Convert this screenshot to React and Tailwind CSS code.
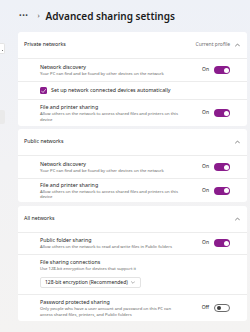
const font = { fontFamily: '"Noto Sans", "Open Sans", sans-serif' };

const Toggle = ({ on }) =>
  on ? (
    <div className="w-[16px] h-[8px] rounded-full bg-[#8a1c8c] flex items-center justify-end pr-[1.5px]">
      <div className="w-[5px] h-[5px] rounded-full bg-white" />
    </div>
  ) : (
    <div className="w-[16px] h-[8px] rounded-full border border-[#6b6b6b] bg-white flex items-center pl-[1.5px]">
      <div className="w-[4px] h-[4px] rounded-full bg-[#3b3b3b]" />
    </div>
  );

const ChevronUp = () => (
  <svg width="5" height="4" viewBox="0 0 10 6" fill="none">
    <path d="M1 5L5 1L9 5" stroke="#444" strokeWidth="1.3" strokeLinecap="round" strokeLinejoin="round" />
  </svg>
);

const ChevronDown = () => (
  <svg width="4" height="3" viewBox="0 0 10 6" fill="none">
    <path d="M1 1L5 5L9 1" stroke="#666" strokeWidth="1.3" strokeLinecap="round" strokeLinejoin="round" />
  </svg>
);

const Header = ({ title, extra }) => (
  <div className="h-[26px] flex items-center pl-[6px] pr-[7px]">
    <span className="text-[5.3px] text-[#1b1b1b]">{title}</span>
    <div className="ml-auto flex items-center gap-[5px]">
      {extra && <span className="text-[5px] text-[#707070]">{extra}</span>}
      <ChevronUp />
    </div>
  </div>
);

const ToggleRow = ({ title, desc, on = true, h = "h-[23px]" }) => (
  <div className={`${h} border-t border-[#ececec] flex items-center pl-[22px] pr-[17px]`}>
    <div className="flex-1 pr-[18px]">
      <div className="text-[5.3px] leading-[7px] text-[#262626]">{title}</div>
      <div className="text-[4.2px] leading-[5.5px] text-[#666]">{desc}</div>
    </div>
    <div className="flex items-center gap-[5px]">
      <span className="text-[5px] text-[#262626]">{on ? "On" : "Off"}</span>
      <Toggle on={on} />
    </div>
  </div>
);

export default function App() {
  return (
    <div
      className="w-[250px] h-[332px] overflow-hidden flex bg-gradient-to-b from-[#eef1f7] via-[#f2f2f4] to-[#f4f3f2]"
      style={font}
    >
      <div className="w-[5px] shrink-0 flex flex-col">
        <div className="mt-[43px] h-[11px] bg-white rounded-r-[2px] border border-l-0 border-[#e4e4e4] flex items-end justify-end pr-[1px] pb-[2px]">
          <div className="w-[1px] h-[1px] bg-[#777]" />
        </div>
        <div className="mt-[56px] h-[14px] bg-[#eaeaea] rounded-r-[2px]" />
      </div>

      <div className="ml-[13px] w-[229px] flex flex-col">
        <div className="h-[32px] flex items-center">
          <span className="text-[7px] tracking-[0.5px] text-[#444] ml-[1px]">•••</span>
          <span className="text-[7px] text-[#555] ml-[9px]">›</span>
          <h1 className="text-[10px] font-semibold text-[#1b1b1b] ml-[6px]">Advanced sharing settings</h1>
        </div>

        <div className="bg-white rounded-[3px] h-[94px] flex flex-col">
          <Header title="Private networks" extra="Current profile" />
          <ToggleRow
            title="Network discovery"
            desc="Your PC can find and be found by other devices on the network"
          />
          <div className="h-[18px] border-t border-[#ececec] flex items-center pl-[22px] gap-[4px]">
            <div className="w-[7px] h-[7px] rounded-[1.5px] bg-[#8a1c8c] flex items-center justify-center">
              <svg width="5" height="4" viewBox="0 0 10 8" fill="none">
                <path d="M1 4L4 7L9 1" stroke="white" strokeWidth="1.4" strokeLinecap="round" strokeLinejoin="round" />
              </svg>
            </div>
            <span className="text-[5.3px] text-[#262626]">Set up network connected devices automatically</span>
          </div>
          <ToggleRow
            h="h-[27px]"
            title="File and printer sharing"
            desc="Allow others on the network to access shared files and printers on this device"
          />
        </div>

        <div className="bg-white rounded-[3px] h-[73px] mt-[3px] flex flex-col">
          <Header title="Public networks" />
          <ToggleRow
            title="Network discovery"
            desc="Your PC can find and be found by other devices on the network"
          />
          <ToggleRow
            h="h-[24px]"
            title="File and printer sharing"
            desc="Allow others on the network to access shared files and printers on this device"
          />
        </div>

        <div className="bg-white rounded-[3px] h-[115px] mt-[4px] flex flex-col">
          <Header title="All networks" />
          <ToggleRow
            h="h-[22px]"
            title="Public folder sharing"
            desc="Allow others on the network to read and write files in Public folders"
          />
          <div className="h-[41px] border-t border-[#ececec] pl-[22px] pt-[4px]">
            <div className="text-[5.3px] leading-[7px] text-[#262626]">File sharing connections</div>
            <div className="text-[4.2px] leading-[5.5px] text-[#666]">
              Use 128-bit encryption for devices that support it
            </div>
            <div className="mt-[6px] w-[101px] h-[11px] bg-white border border-[#e3e3e3] rounded-[2px] flex items-center pl-[4px] pr-[5px]">
              <span className="text-[5px] text-[#262626]">128-bit encryption (Recommended)</span>
              <span className="ml-auto">
                <ChevronDown />
              </span>
            </div>
          </div>
          <ToggleRow
            h="h-[27px]"
            on={false}
            title="Password protected sharing"
            desc="Only people who have a user account and password on this PC can access shared files, printers, and Public folders"
          />
        </div>
      </div>
    </div>
  );
}
